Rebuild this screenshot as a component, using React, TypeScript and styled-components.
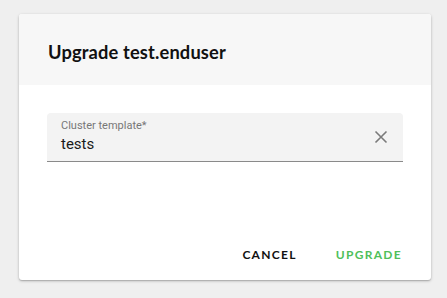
import React from "react";
import styled, { createGlobalStyle } from "styled-components";

const Global = createGlobalStyle`
  html, body { margin: 0; padding: 0; background: #efefef; }
  body { font-family: Roboto, "Liberation Sans", sans-serif; }
`;

const Page = styled.div`
  width: 447px;
  height: 298px;
  padding: 14px 0 0 19px;
  box-sizing: border-box;
`;

const Dialog = styled.div`
  width: 412px;
  height: 266px;
  background: #fff;
  border-radius: 3px;
  box-shadow: 0 1px 3px rgba(0,0,0,0.25), 0 1px 1px rgba(0,0,0,0.12);
  display: flex;
  flex-direction: column;
  overflow: hidden;
`;

const Header = styled.div`
  height: 71px;
  background: #f7f7f7;
  display: flex;
  align-items: center;
  padding: 4px 0 0 29px;
  box-sizing: border-box;
`;

const Title = styled.h2`
  margin: 0;
  font-family: Lato, "Open Sans", sans-serif;
  font-weight: 700;
  font-size: 18.3px;
  color: #111;
  letter-spacing: 0.15px;
`;

const Body = styled.div`
  padding: 28px 28px 0 28px;
  flex: 1;
`;

const Field = styled.div`
  height: 49px;
  background: #f3f3f3;
  border-radius: 4px 4px 0 0;
  border-bottom: 1.5px solid #8a8a8a;
  box-sizing: border-box;
  display: flex;
  align-items: center;
  padding: 0 14px 0 14px;
`;

const FieldText = styled.div`
  flex: 1;
  display: flex;
  flex-direction: column;
`;

const Label = styled.span`
  font-size: 11px;
  color: #777;
  line-height: 13px;
  margin-top: -2px;
`;

const Value = styled.span`
  font-size: 15px;
  color: #1a1a1a;
  line-height: 19px;
  margin-top: 3px;
`;

const ClearButton = styled.button`
  border: 0;
  background: none;
  padding: 0;
  width: 16px;
  height: 16px;
  display: flex;
  align-items: center;
  justify-content: center;
  color: #777;
`;

const Footer = styled.div`
  display: flex;
  justify-content: flex-end;
  align-items: center;
  gap: 23px;
  padding: 0 21px 10px 0;
`;

const TextButton = styled.button<{ $primary?: boolean }>`
  border: 0;
  background: none;
  padding: 8px 8px;
  font-family: Lato, "Open Sans", sans-serif;
  font-weight: 700;
  font-size: 12px;
  letter-spacing: 1.3px;
  color: ${(p) => (p.$primary ? "#4fbf5a" : "#111")};
`;

export default function App() {
  return (
    <>
      <Global />
      <Page>
        <Dialog>
          <Header>
            <Title>Upgrade test.enduser</Title>
          </Header>
          <Body>
            <Field>
              <FieldText>
                <Label>Cluster template*</Label>
                <Value>tests</Value>
              </FieldText>
              <ClearButton aria-label="clear">
                <svg width="14" height="14" viewBox="0 0 14 14">
                  <path d="M1.5 1.5 L12.5 12.5 M12.5 1.5 L1.5 12.5" stroke="#7a7a7a" strokeWidth="1.6" fill="none" />
                </svg>
              </ClearButton>
            </Field>
          </Body>
          <Footer>
            <TextButton>CANCEL</TextButton>
            <TextButton $primary>UPGRADE</TextButton>
          </Footer>
        </Dialog>
      </Page>
    </>
  );
}
